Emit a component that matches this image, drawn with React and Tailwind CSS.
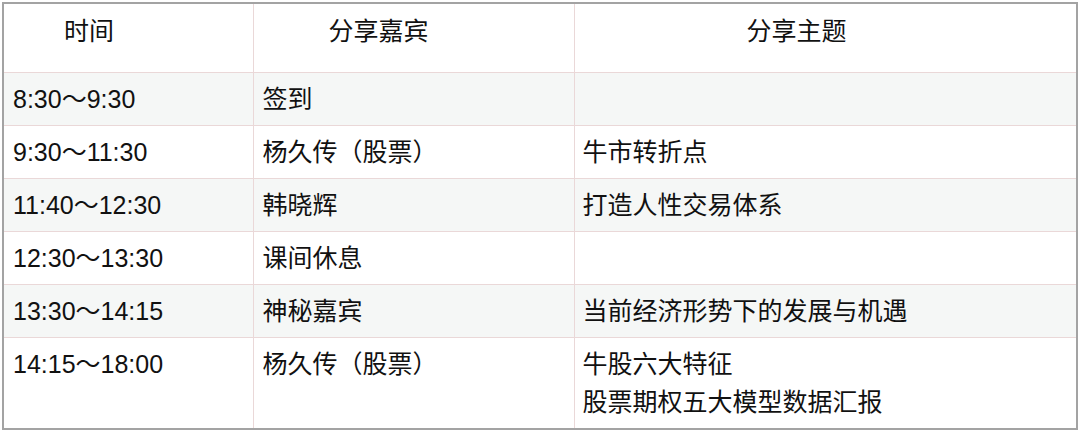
const rows = [
  { time: "8:30～9:30", guest: "签到", topic: [], shade: true },
  { time: "9:30～11:30", guest: "杨久传（股票）", topic: ["牛市转折点"] },
  { time: "11:40～12:30", guest: "韩晓辉", topic: ["打造人性交易体系"], shade: true },
  { time: "12:30～13:30", guest: "课间休息", topic: [] },
  { time: "13:30～14:15", guest: "神秘嘉宾", topic: ["当前经济形势下的发展与机遇"], shade: true },
  { time: "14:15～18:00", guest: "杨久传（股票）", topic: ["牛股六大特征", "股票期权五大模型数据汇报"], tall: true },
];

export default function App() {
  return (
    <div
      className="w-[1080px] h-[433px] bg-white pl-[2px] pt-[2px] text-[#111] overflow-hidden"
      style={{ fontFamily: '"Liberation Sans", "Noto Sans CJK SC", sans-serif' }}
    >
      <table className="w-[1076px] border-collapse border-2 border-[#a3a3a3] text-[25px] leading-[38px] table-fixed">
        <colgroup>
          <col className="w-[250px]" />
          <col className="w-[321px]" />
          <col />
        </colgroup>
        <thead>
          <tr className="h-[69px]">
            <th className="border border-[#ead8d8] align-top text-left font-normal pl-[60px] pt-[8px]">时间</th>
            <th className="border border-[#ead8d8] align-top text-left font-normal pl-[75px] pt-[8px]">分享嘉宾</th>
            <th className="border border-[#ead8d8] align-top text-left font-normal pl-[172px] pt-[8px]">分享主题</th>
          </tr>
        </thead>
        <tbody>
          {rows.map((r) => (
            <tr key={r.time} className={(r.shade ? "bg-[#f5f7f6] " : "bg-white ") + (r.tall ? "h-[92px]" : "h-[53px]")}>
              <td className="border border-[#ead8d8] align-top pl-[9px] pt-[7px]">{r.time}</td>
              <td className="border border-[#ead8d8] align-top pl-[9px] pt-[7px]">{r.guest}</td>
              <td className="border border-[#ead8d8] align-top pl-[8px] pt-[7px]">
                {r.topic.map((t) => (
                  <div key={t}>{t}</div>
                ))}
              </td>
            </tr>
          ))}
        </tbody>
      </table>
    </div>
  );
}
